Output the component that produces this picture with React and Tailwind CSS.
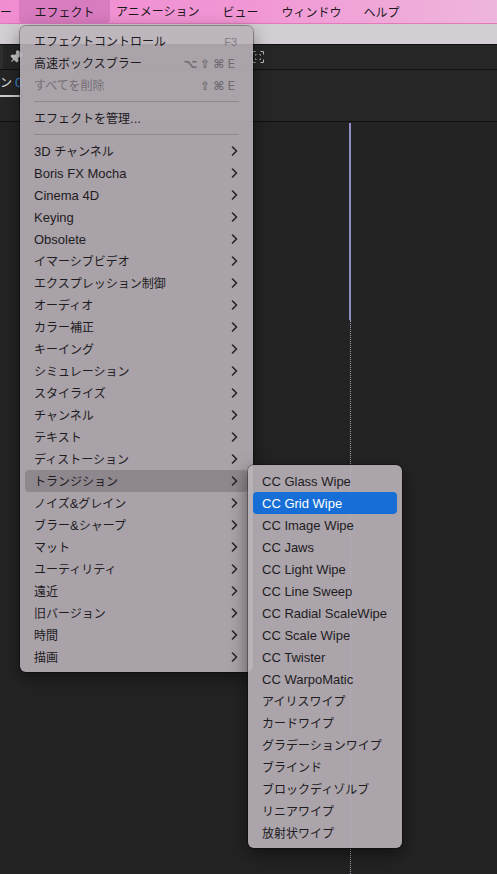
import { Pin } from 'lucide-react';

const CJK = /([\u3000-\u30ff\u4e00-\u9fff\uff00-\uffef]+)/;

// CJK runs are set a point smaller so they match the Hiragino widths
function Txt({ s }) {
    return s.split(CJK).filter(Boolean).map((part, i) =>
        CJK.test(part) ? (
            <span key={i} className="text-[12px]">{part}</span>
        ) : (
            <span key={i}>{part}</span>
        )
    );
}

const effectMenu = [
    { label: 'エフェクトコントロール', keys: 'F3', small: true },
    { label: '高速ボックスブラー', keys: '⌥⇧⌘E' },
    { label: 'すべてを削除', keys: '⇧⌘E', disabled: true },
    { sep: true },
    { label: 'エフェクトを管理...' },
    { sep: true },
    ...[
        '3D チャンネル',
        'Boris FX Mocha',
        'Cinema 4D',
        'Keying',
        'Obsolete',
        'イマーシブビデオ',
        'エクスプレッション制御',
        'オーディオ',
        'カラー補正',
        'キーイング',
        'シミュレーション',
        'スタイライズ',
        'チャンネル',
        'テキスト',
        'ディストーション',
        'トランジション',
        'ノイズ&グレイン',
        'ブラー&シャープ',
        'マット',
        'ユーティリティ',
        '遠近',
        '旧バージョン',
        '時間',
        '描画',
    ].map((label) => ({ label, sub: true })),
];

const transitions = [
    'CC Glass Wipe',
    'CC Grid Wipe',
    'CC Image Wipe',
    'CC Jaws',
    'CC Light Wipe',
    'CC Line Sweep',
    'CC Radial ScaleWipe',
    'CC Scale Wipe',
    'CC Twister',
    'CC WarpoMatic',
    'アイリスワイプ',
    'カードワイプ',
    'グラデーションワイプ',
    'ブラインド',
    'ブロックディゾルブ',
    'リニアワイプ',
    '放射状ワイプ',
];

function Chevron() {
    return (
        <svg width="7" height="10" viewBox="0 0 7 10" className="-mt-[2px] shrink-0">
            <path d="M1.5 1 L5.5 5 L1.5 9" fill="none" stroke="#262426" strokeWidth="1.6" strokeLinecap="round" strokeLinejoin="round" />
        </svg>
    );
}

function Shortcut({ keys, small }) {
    if (small) {
        return <span className="mr-[1px] text-[11px] text-[#817b82]">{keys}</span>;
    }
    return (
        <span className="mr-[3px] flex gap-[3px] font-['DejaVu_Sans',sans-serif] text-[12px] font-bold text-[#716c72]">
            {keys.split('').map((k, i) => (
                <span key={i} className={k === 'E' ? 'font-normal' : ''}>{k}</span>
            ))}
        </span>
    );
}

function FitIcon() {
    return (
        <svg width="12" height="12" viewBox="0 0 12 12" fill="none" stroke="#bdbdbd" strokeWidth="1">
            <path d="M0.5 3.5V0.5H3.5M8.5 0.5H11.5V3.5M11.5 8.5V11.5H8.5M3.5 11.5H0.5V8.5" />
            <path d="M3.5 4.5V3.5H4.5M7.5 3.5H8.5V4.5M8.5 7.5V8.5H7.5M4.5 8.5H3.5V7.5" />
        </svg>
    );
}

export default function App() {
    return (
        <div className="relative flex h-[874px] w-[497px] flex-col overflow-hidden bg-[#232323] font-['Liberation_Sans','Noto_Sans_CJK_JP',sans-serif] text-[13px]">
            {/* menu bar */}
            <header className="flex h-[24px] shrink-0 items-center border-b border-[#e07ab8] bg-gradient-to-r from-[#f08dd1] via-[#f196d4] to-[#eeb6dd] text-[#1b1a1b]">
                <span className="pt-[2px] text-[12px]">ー</span>
                <div className="ml-[7px] flex h-[24px] w-[91px] items-center justify-center rounded-b-[5px] bg-[#d97bbf] pt-[2px]">
                    <Txt s="エフェクト" />
                </div>
                <div className="ml-[6px] flex gap-[23px] pt-[2px]">
                    <Txt s="アニメーション" />
                    <span><Txt s="ビュー" /></span>
                    <span><Txt s="ウィンドウ" /></span>
                    <span className="-ml-[1px]"><Txt s="ヘルプ" /></span>
                </div>
            </header>

            <div className="h-[20px] shrink-0 bg-[#d3ced3]" />

            {/* panel toolbar */}
            <div className="flex h-[26px] shrink-0 items-center border-y border-[#121212] bg-[#262626]">
                <div className="h-full w-[3px] bg-[#2f2f2f]" />
                <Pin size={14} fill="#c9c9c9" className="ml-[6px] rotate-45 text-[#c9c9c9]" />
                <div className="ml-auto mr-[233px]">
                    <FitIcon />
                </div>
            </div>

            {/* panel tabs */}
            <div className="relative h-[52px] shrink-0 border-b border-[#121212] bg-[#262626]">
                <div className="flex h-[22px] items-end text-[12px] text-[#e0e0e0]">
                    <span>ン</span>
                    <span className="ml-[3px] text-[13px] text-[#3d8fe2]">0</span>
                </div>
                <div className="mt-[3px] h-[2px] w-[20px] bg-[#cfcfcf]" />
            </div>

            {/* timeline */}
            <div className="relative flex-1">
                <div className="absolute left-[349px] top-[1px] h-[197px] w-[2px] bg-[#8d8dc4]" />
                <div className="absolute left-[350px] top-[198px] bottom-0 border-l border-dotted border-[#a3a3b8]" />
            </div>

            {/* エフェクト menu */}
            <div className="absolute left-[20px] top-[26px] w-[233px] rounded-[6px] bg-[#bab3b9]/[0.89] py-[4px] text-[#1e1c1f] shadow-[0_6px_18px_rgba(0,0,0,0.45)] ring-1 ring-black/30">
                {effectMenu.map((item, i) =>
                    item.sep ? (
                        <div key={i} className="flex h-[11px] items-center px-[14px]">
                            <div className="h-px w-full bg-[#8f898f]" />
                        </div>
                    ) : (
                        <div
                            key={i}
                            className={`mx-[5px] flex h-[22px] items-center justify-between rounded-[4px] pl-[9px] pr-[10px] pt-[2px] ${item.label === 'トランジション' ? 'bg-[#8e878d]' : ''} ${item.disabled ? 'text-[#756f76]' : ''}`}
                        >
                            <span><Txt s={item.label} /></span>
                            {item.keys && <Shortcut keys={item.keys} small={item.small} />}
                            {item.sub && <Chevron />}
                        </div>
                    )
                )}
            </div>

            {/* トランジション submenu */}
            <div className="absolute left-[248px] top-[465px] w-[154px] rounded-[6px] bg-[#bab3b9]/[0.9] pb-[4px] pt-[5px] text-[#1e1c1f] shadow-[0_6px_18px_rgba(0,0,0,0.5)] ring-1 ring-black/30">
                {transitions.map((label) => (
                    <div
                        key={label}
                        className={`mx-[5px] flex h-[22px] items-center rounded-[4px] px-[9px] pt-[2px] ${label === 'CC Grid Wipe' ? 'bg-[#166ed6] text-white' : ''}`}
                    >
                        <Txt s={label} />
                    </div>
                ))}
            </div>
        </div>
    );
}
